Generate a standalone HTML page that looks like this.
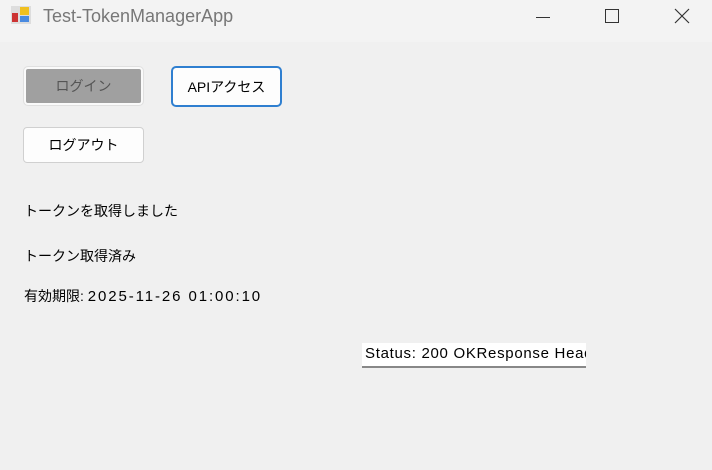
<html><head><style>
body{margin:0;width:712px;height:470px;background:#f0f0f0;font-family:"Liberation Sans","Noto Sans CJK JP",sans-serif;position:relative;overflow:hidden}
.t{position:absolute;left:0;top:0;width:712px;height:42px;background:#f3f3f3}
.a{position:absolute}
.btn{position:absolute;box-sizing:border-box;background:#fdfdfd;border:1px solid #d0d0d0;border-radius:4px;font-size:14px;color:#000;display:flex;align-items:center;justify-content:center}
.lbl{position:absolute;left:24px;font-size:14px;color:#000}
</style></head><body>
<div class="t"></div>
<div class="a" style="left:10px;top:5px;width:22px;height:20px">
<div class="a" style="left:1px;top:1px;width:20px;height:18px;background:#ddd"></div>
<div class="a" style="left:2px;top:8px;width:6px;height:9px;background:#c33"></div>
<div class="a" style="left:10px;top:2px;width:9px;height:8px;background:#f0c020"></div>
<div class="a" style="left:10px;top:11px;width:9px;height:6px;background:#4a8ae0"></div>
</div>
<div class="a" style="left:43px;top:6px;font-size:18px;color:#777">Test-TokenManagerApp</div>
<div class="a" style="left:536px;top:17px;width:14px;height:1px;background:#333"></div>
<div class="a" style="left:605px;top:9px;width:12px;height:12px;border:1px solid #333"></div>
<svg class="a" style="left:674px;top:8px" width="16" height="16"><path d="M1 1L15 15M15 1L1 15" stroke="#333" stroke-width="1.2"/></svg>
<div class="btn" style="left:24px;top:67px;width:119px;height:38px;border:2px solid #fafafa;background:#a0a0a0;color:#555;outline:1px solid #e0e0e0">ログイン</div>
<div class="btn" style="left:171px;top:66px;width:111px;height:41px;border:2px solid #2f7fd0;border-radius:5px">APIアクセス</div>
<div class="btn" style="left:23px;top:127px;width:121px;height:36px">ログアウト</div>
<div class="lbl" style="top:201px">トークンを取得しました</div>
<div class="lbl" style="top:246px">トークン取得済み</div>
<div class="lbl" style="top:286px">有効期限: <span style="letter-spacing:1.9px;font-size:15px">2025-11-26 01:00:10</span></div>
<div class="a" style="left:362px;top:343px;width:224px;height:25px;background:#fff;border-bottom:2px solid #888;box-sizing:border-box;overflow:hidden;white-space:nowrap;font-size:15px;letter-spacing:0.7px;padding:2px 0 0 3px">Status: 200 OKResponse Headers</div>
</body></html>
